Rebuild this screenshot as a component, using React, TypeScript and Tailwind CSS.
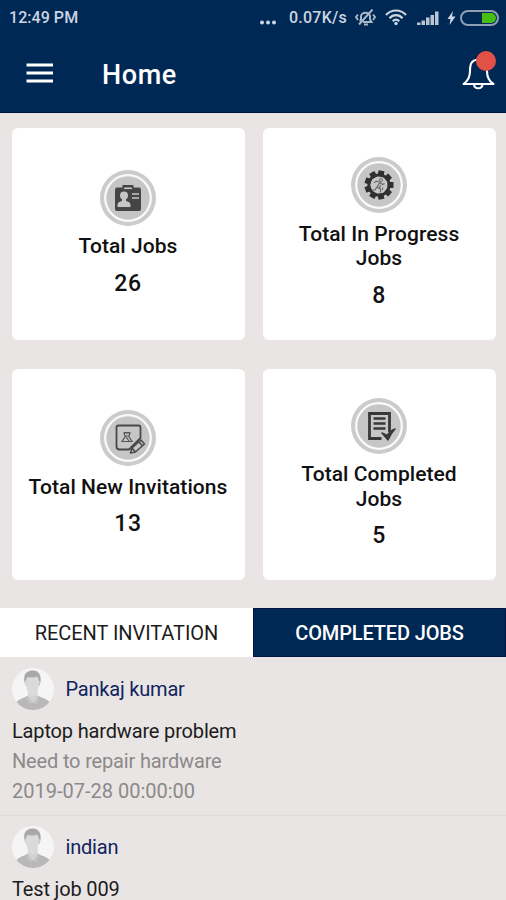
import React from 'react';

interface StatCardProps {
  title: React.ReactNode;
  value: number;
  icon: React.ReactNode;
  className?: string;
}

interface Invitation {
  name: string;
  title: string;
  description?: string;
  date?: string;
}

const invitations: Invitation[] = [
  {
    name: 'Pankaj kumar',
    title: 'Laptop hardware problem',
    description: 'Need to repair hardware',
    date: '2019-07-28 00:00:00',
  },
  {
    name: 'indian',
    title: 'Test job 009',
  },
];

const gearTeeth = [10, 50, 90, 130, 170, 210, 250, 290, 330];

/* Shared round badge, icons are drawn on a 56x56 grid */
const Badge: React.FC<{ children: React.ReactNode }> = ({ children }) => (
  <svg viewBox="0 0 56 56" className="h-14 w-14 flex-shrink-0" fill="none">
    <circle cx="28" cy="28" r="28" fill="#cbcbcb" />
    <circle cx="28" cy="28" r="22.8" fill="#c6c6c6" stroke="#fafafa" strokeWidth="2.2" />
    {children}
  </svg>
);

const JobsIcon = () => (
  <Badge>
    <path d="M23.500 18v-2h9v2" stroke="#454545" strokeWidth="2" />
    <rect x="15" y="17.500" width="26" height="23.500" rx="2" fill="#454545" />
    <path d="M24 18.500h8" stroke="#c6c6c6" strokeWidth="1.200" />
    <circle cx="24" cy="25.500" r="4" fill="#c6c6c6" />
    <path d="M17.500 37v-2c0-2.500 2-3.500 4.500-4v-3h4v3c2.500.5 4.500 1.500 4.500 4v2z" fill="#c6c6c6" />
    <path d="M32 24h7M32 28h7" stroke="#c6c6c6" strokeWidth="1.500" />
  </Badge>
);

const ProgressIcon = () => (
  <Badge>
    {gearTeeth.map((angle) => (
      <rect key={angle} x="25" y="13.500" width="6" height="6" rx="0.500" fill="#303030" transform={`rotate(${angle} 28 28)`} />
    ))}
    <circle cx="28" cy="28" r="10.200" stroke="#303030" strokeWidth="2.800" />
    <circle cx="30" cy="23" r="1.500" stroke="#666" strokeWidth="0.900" />
    <path
      d="M23 25.500l3-1.500 3 1.500 2.500 2 2-1M28.500 26l-2.500 4 3.500 2v3.500M26 30l-2 3h-3M29.500 28l-1 3M32 30.500l-1 2.500"
      stroke="#666"
      strokeWidth="1.100"
    />
  </Badge>
);

const InvitationIcon = () => (
  <Badge>
    <path
      d="M29 39.500H19.500a3 3 0 0 1-3-3v-19a2 2 0 0 1 2-2h20a2 2 0 0 1 2 2V28L29 39.500z"
      stroke="#484848"
      strokeWidth="1.800"
      strokeLinejoin="round"
    />
    <path d="M25 26l-1-3h6l-1 3M24 22.500h6M25.500 26l-3.500 5.500h10L28.500 26M25 26h4M26 27l3 4" stroke="#555" strokeWidth="1.200" />
    <path d="M30.500 43l1.500-5 9-8 3.500 4-9 8zM32 38l3.500 4M39 32l3.500 4" fill="#c6c6c6" stroke="#484848" strokeWidth="1.500" strokeLinejoin="round" />
  </Badge>
);

const CompletedIcon = () => (
  <Badge>
    <path d="M30.500 40.500H18.500v-25h20V34" stroke="#383838" strokeWidth="2.800" />
    <path d="M22.500 20.500h12M22.500 25.500h12M22.500 30.500h12" stroke="#383838" strokeWidth="2.400" />
    <path d="M31 35l5 2.500c2.500-3.500 5-5.500 8-6.500-3.500 3.500-5 6-7 11z" fill="#383838" stroke="#383838" strokeWidth="1.500" strokeLinejoin="round" />
  </Badge>
);

const Avatar = () => (
  <svg viewBox="0 0 42 42" className="h-[42px] w-[42px] flex-shrink-0">
    <circle cx="21" cy="21" r="21" fill="#f5f5f5" />
    <path d="M4.500 34c2-2.500 5-3.500 8-4.500l3.500-2h9.500l4 2c3.500 1 6 2 8 4.500a21 21 0 0 1-33 0z" fill="#b8b8b8" />
    <path d="M16 23h9.500v6L21 35l-5-6z" fill="#d3d4d4" />
    <path d="M16 28.500l5 6.500 4.500-6.500 1.500 1.500-2.500 6-3.500-1.500-3.500 1.500-3-6z" fill="#c6c6c6" />
    <path d="M12.500 14C11 6 14.500 3 20 2.500c6.500-.5 9.500 4.500 8.500 11.500l-1 3.500h-14z" fill="#a7a8a7" />
    <path
      d="M13.500 13l2-4c3.500.8 7 .3 10-.5l1.500 4.500c1.200.5.8 4-.5 5-.5 5-2.500 10.500-6 10.500s-5.500-5.500-6-10.500c-1.500-1-2-4-1-5z"
      fill="#d9dada"
    />
  </svg>
);

const StatCard: React.FC<StatCardProps> = ({ title, value, icon, className = '' }) => (
  <div className={`flex flex-col items-center justify-center rounded-md bg-white text-center font-medium text-[#111] ${className}`}>
    {icon}
    <h2 className="mt-[8.500px] text-[21px] leading-[24.5px] tracking-[0.06px]">{title}</h2>
    <p className="mt-2.5 mb-px text-[23px] leading-[29px] tracking-[0.6px]">{value}</p>
  </div>
);

const StatusBar = () => (
  <div className="flex h-9 items-center justify-between pr-[7px] pl-[9px] text-[16px] font-medium text-[#ccd5e1]">
    <span className="tracking-[0.05px]">12:49 PM</span>
    <div className="flex items-center">
      <svg viewBox="0 0 18 18" className="mr-[12px] h-[18px] w-[18px]" fill="currentColor">
        <circle cx="3" cy="13.500" r="2" />
        <circle cx="9" cy="13.500" r="2" />
        <circle cx="15" cy="13.500" r="2" />
      </svg>
      <span className="mr-[8px] tracking-[0.25px]">0.07K/s</span>
      {/* Muted bell */}
      <svg viewBox="0 0 21 18" className="mr-[9px] h-[18px] w-[21px]" fill="none" stroke="#a9b7c8" strokeWidth="2">
        <path d="M5 12.500l1-2V7.500C6 2.500 15 2.500 15 7.500v3l1.500 2.500H8M9 15.500h4M3 5.500L1 8l2 3M18 5.500l2 2.500-2 3" />
        <path d="M17.500 0.500L4 15.500" strokeWidth="2" />
      </svg>
      <svg viewBox="0 0 22 18" className="mr-[10px] h-[18px] w-[22px]" fill="none" stroke="currentColor" strokeWidth="2.200">
        <path d="M1 6c5.500-6 14.500-6 20 0M4.500 9.200c3.500-4 9.500-4 13 0M7.800 12.200c1.800-2 4.600-2 6.400 0" />
        <circle cx="11" cy="14.500" r="1.700" fill="currentColor" stroke="none" />
      </svg>
      <svg viewBox="0 0 22 18" className="mr-[8px] h-[18px] w-[22px]" fill="#b9c5d3">
        <rect x="0" y="13.500" width="3.500" height="2.500" />
        <rect x="4.500" y="11.500" width="3.500" height="4.500" />
        <rect x="9" y="8.500" width="3.500" height="7.500" />
        <rect x="13.500" y="6" width="3.500" height="10" />
        <rect x="18" y="2.500" width="3.500" height="13.500" />
      </svg>
      <svg viewBox="0 0 9 14" className="mr-[4px] h-[14px] w-[9px]" fill="currentColor">
        <path d="M6 0L0.500 8h3L2.500 14 8.500 5.500H5z" />
      </svg>
      <svg viewBox="0 0 39 16" className="h-4 w-[39px]">
        <rect x="1" y="1" width="37" height="14" rx="7" fill="none" stroke="#8f9fb4" strokeWidth="2" />
        <path d="M22 3h9a5 5 0 0 1 0 10h-9z" fill="#48bd12" />
      </svg>
    </div>
  </div>
);

const Header = () => (
  <header className="h-[113px] border-b border-[#00123f] bg-[#002855]">
    <StatusBar />
    <div className="flex h-[77px] items-center pr-[10px] pl-[26px] text-white">
      <svg viewBox="0 0 28 20" className="-mt-[3px] h-5 w-7" fill="currentColor">
        <rect x="0.500" y="0.500" width="26.500" height="3" />
        <rect x="0.500" y="8.500" width="26.500" height="3" />
        <rect x="0.500" y="16.500" width="26.500" height="3" />
      </svg>
      <h1 className="mt-px ml-12 text-[27px] leading-8 font-medium tracking-[0.6px]">Home</h1>
      <svg viewBox="0 0 34 40" className="mb-[7px] ml-auto h-10 w-[34px]" fill="none">
        <path
          d="M1.500 33c4.500-3 6.500-7 6.500-13C8 13 9.500 9 16 8.500S25 14 25 20c0 6 1.500 10 6.500 13zM12 33.500c.5 5 8 5 8.500 0"
          stroke="#fff"
          strokeWidth="2.100"
          strokeLinejoin="round"
        />
        <circle cx="24" cy="10" r="10" fill="#e25145" />
      </svg>
    </div>
  </header>
);

const InvitationItem: React.FC<{ item: Invitation }> = ({ item }) => (
  <li className="h-[158.500px] border-b border-[#dedbda] pt-[10.500px] pl-3">
    <div className="flex items-center gap-[11.500px]">
      <Avatar />
      <span className="text-[20px] tracking-[-0.2px] text-[#12235e]">{item.name}</span>
    </div>
    <p className="mt-[6px] text-[20px] leading-[30px] tracking-[-0.16px] text-[#1c1c1c]">{item.title}</p>
    <p className="text-[20px] leading-[31px] tracking-[-0.16px] text-[#8b8989]">{item.description}</p>
    <p className="text-[20px] leading-[29px] text-[#8b8989]">{item.date}</p>
  </li>
);

export default function App() {
  return (
    <div className="h-[900px] w-[506px] overflow-hidden bg-[#e9e5e4] font-[Roboto,sans-serif]">
      <Header />

      <main>
        <section className="grid grid-cols-[233px_233px] gap-x-[18px] gap-y-[29px] pt-[15px] pl-[11.500px]">
          <StatCard title="Total Jobs" value={26} icon={<JobsIcon />} className="h-[212px]" />
          <StatCard
            title={<>Total In Progress<br />Jobs</>}
            value={8}
            icon={<ProgressIcon />}
            className="h-[212px]"
          />
          <StatCard title="Total New Invitations" value={13} icon={<InvitationIcon />} className="h-[211px]" />
          <StatCard
            title={<>Total Completed<br />Jobs</>}
            value={5}
            icon={<CompletedIcon />}
            className="h-[211px]"
          />
        </section>

        {/* Tabs */}
        <div className="mt-7 flex h-[49px] text-[20px]">
          <button className="w-[253px] bg-white tracking-[-0.06px] text-[#1c1c1c]">RECENT INVITATION</button>
          <button className="flex-1 border border-[#001447] bg-[#002855] font-medium tracking-[-0.15px] text-white">COMPLETED JOBS</button>
        </div>

        <ul>
          {invitations.map((item) => (
            <InvitationItem key={item.name} item={item} />
          ))}
        </ul>
      </main>
    </div>
  );
}
